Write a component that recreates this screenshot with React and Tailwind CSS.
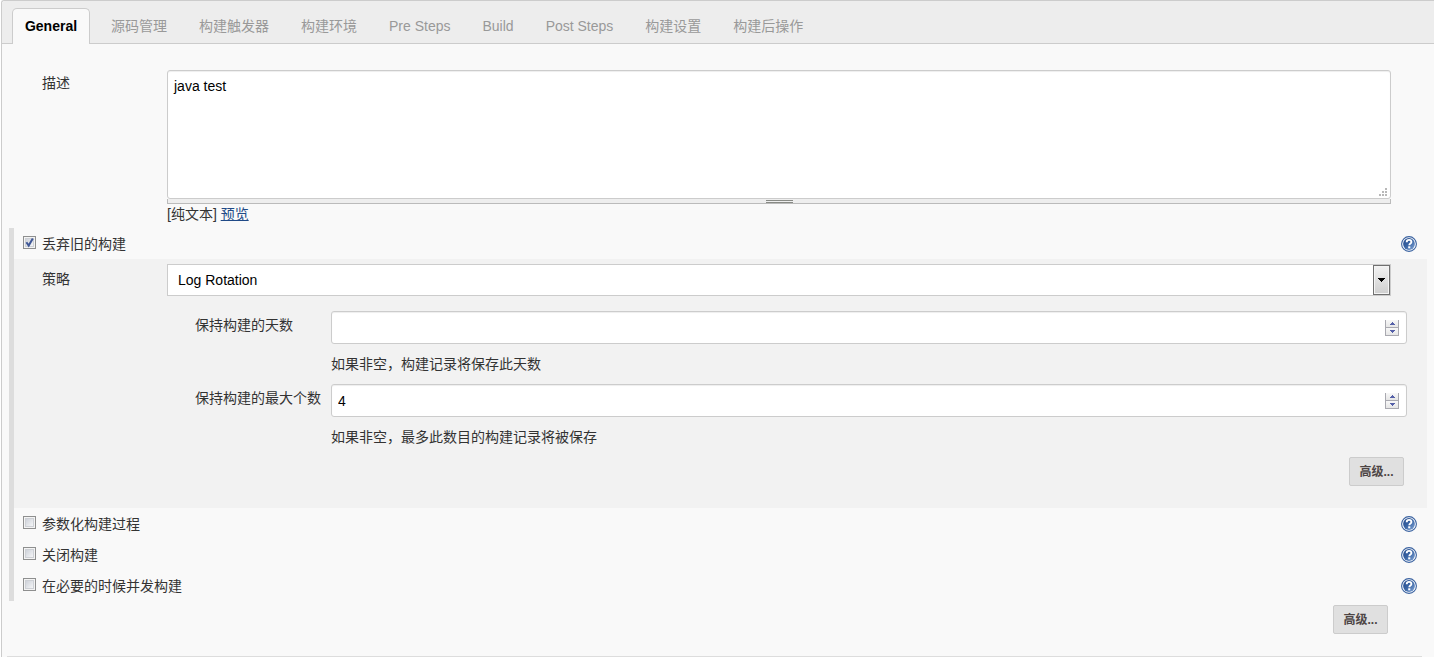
import React, { useState } from "react";

const TABS = [
  "General",
  "源码管理",
  "构建触发器",
  "构建环境",
  "Pre Steps",
  "Build",
  "Post Steps",
  "构建设置",
  "构建后操作",
];

const HelpButton = ({ topic }) => (
  <button type="button" aria-label={`帮助: ${topic}`} className="mt-2 h-4 w-4 shrink-0">
    <svg viewBox="0 0 16 16" className="h-4 w-4">
      <defs>
        <linearGradient id="help-fill" x1="0" y1="0" x2="1" y2="1">
          <stop offset="0" stopColor="#23498a" />
          <stop offset="0.5" stopColor="#3b66a6" />
          <stop offset="1" stopColor="#86a9d8" />
        </linearGradient>
      </defs>
      <circle cx="8" cy="8" r="7.4" fill="#fff" stroke="#3a62a0" strokeWidth="1.1" />
      <circle cx="8" cy="8" r="5.9" fill="url(#help-fill)" />
      <path
        d="M5.7 6.2c0-1.5 1-2.3 2.4-2.3s2.3 0.8 2.3 2c0 1.6-2.1 1.7-2.1 3.4"
        fill="none"
        stroke="#fff"
        strokeWidth="1.9"
      />
      <rect x="7.2" y="10.3" width="2.1" height="2" fill="#fff" />
    </svg>
  </button>
);

const CheckRow = ({ id, label, checked, onChange }) => (
  <div className="flex h-[31px] items-start pl-[9px] pr-[17px]">
    <span className="mt-2 grid h-[13px] w-[13px] shrink-0">
      <input
        id={id}
        type="checkbox"
        checked={checked}
        onChange={onChange}
        className="col-start-1 row-start-1 h-[13px] w-[13px] appearance-none border border-[#8e8f8f] bg-linear-to-br from-[#c4c9d2] to-[#ffffff] shadow-[inset_0_0_0_1px_#f4f4f4,inset_0_0_0_2px_#cdd0d5]"
      />
      {checked && (
        <svg viewBox="0 0 13 13" className="pointer-events-none col-start-1 row-start-1 h-[13px] w-[13px]">
          <path d="M3.4 6.2L5.7 9.6L9.8 2.6" fill="none" stroke="#3f5796" strokeWidth="2" />
        </svg>
      )}
    </span>
    <label htmlFor={id} className="ml-[6px] mt-[6px] flex-1 leading-5">
      {label}
    </label>
    <HelpButton topic={label} />
  </div>
);

const SpinButton = ({ label, onClick, children }) => (
  <button
    type="button"
    aria-label={label}
    onClick={onClick}
    className="flex h-2 w-[14px] items-center justify-center border-x border-b border-[#a9a9b0] bg-linear-to-b from-[#f8f8f8] to-[#e6e6e6]"
  >
    <svg viewBox="0 0 5 3" className="h-[3px] w-[5px]" shapeRendering="crispEdges" fill="#5560a8">
      {children}
    </svg>
  </button>
);

const NumberRow = ({ id, label, hint, value, onChange }) => (
  <div className="flex h-[73px]">
    <label htmlFor={id} className="mt-1 w-[136px] shrink-0 leading-5">
      {label}
    </label>
    <div className="flex-1">
      <div className="flex h-[33px] items-center rounded-[3px] border border-[#ccc] bg-white pr-[7px] shadow-[inset_0_1px_1px_#eee]">
        <input
          id={id}
          type="number"
          value={value}
          onChange={(e) => onChange(e.target.value)}
          className="min-w-0 flex-1 appearance-none bg-transparent pl-[6px] text-black outline-none [appearance:textfield] [&::-webkit-inner-spin-button]:appearance-none"
        />
        <div className="flex flex-col">
          <SpinButton label={`${label} +`} onClick={() => onChange(String(Number(value) + 1))}>
            <path d="M2 0h1v1H2zM1 1h3v1H1zM0 2h5v1H0z" />
          </SpinButton>
          <SpinButton label={`${label} -`} onClick={() => onChange(String(Number(value) - 1))}>
            <path d="M0 0h5v1H0zM1 1h3v1H1zM2 2h1v1H2z" />
          </SpinButton>
        </div>
      </div>
      <p className="mt-[10px] leading-5">{hint}</p>
    </div>
  </div>
);

const AdvancedButton = () => (
  <button
    type="button"
    className="h-[29px] w-[55px] rounded-[2px] border border-[#ccc] bg-[#e0e0e0] text-xs font-bold text-[#4d4545]"
  >
    高级...
  </button>
);

const App = () => {
  const [activeTab, setActiveTab] = useState("General");
  const [description, setDescription] = useState("java test");
  const [days, setDays] = useState("");
  const [maxBuilds, setMaxBuilds] = useState("4");
  const [options, setOptions] = useState({
    discard: true,
    params: false,
    disable: false,
    concurrent: false,
  });

  const toggle = (name) => setOptions({ ...options, [name]: !options[name] });

  return (
    <div className="min-h-screen bg-white pl-px font-['Liberation_Sans','Noto_Sans_CJK_SC',sans-serif] text-sm text-[#333]">
      <div className="min-h-screen rounded-tl-[3px] border-l border-t border-[#ccc] bg-[#f9f9f9]">
        <nav className="flex h-[43px] items-end rounded-tl-[3px] border-b border-[#ccc] bg-[#ededed] pl-[10px]">
          {TABS.map((tab) => (
            <button
              key={tab}
              type="button"
              onClick={() => setActiveTab(tab)}
              className={
                tab === activeTab
                  ? "-mb-px mr-[5px] h-9 min-w-[78px] rounded-t-[5px] border border-b-0 border-[#ccc] bg-[#f9f9f9] px-[10px] pb-[2px] font-bold text-black"
                  : "h-[35px] px-4 text-[#999]"
              }
            >
              {tab}
            </button>
          ))}
        </nav>

        <form onSubmit={(e) => e.preventDefault()}>
          <div className="flex pl-10 pr-[43px] pt-[26px]">
            <label htmlFor="description" className="mt-[3px] w-[125px] shrink-0 leading-5">
              描述
            </label>
            <div className="flex-1">
              <div className="relative">
                <textarea
                  id="description"
                  value={description}
                  onChange={(e) => setDescription(e.target.value)}
                  className="block h-[129px] w-full resize-none rounded-[3px] border border-[#ccc] bg-white px-[6px] py-[5px] leading-5 text-black shadow-[inset_0_1px_1px_#eee] outline-none"
                />
                <svg viewBox="0 0 8 8" fill="#b8b8b8" className="pointer-events-none absolute bottom-[3px] right-1 h-2 w-2">
                  <path d="M6 0h2v2H6zM3 3h2v2H3zM6 3h2v2H6zM0 6h2v2H0zM3 6h2v2H3zM6 6h2v2H6z" />
                </svg>
              </div>
              {/* drag handle under the text area */}
              <div className="flex h-[5px] cursor-row-resize items-center justify-center border-x border-b border-[#bbb] bg-[#eee]">
                <div className="h-[3px] w-[27px] border-y border-[#888a85]"></div>
              </div>
              <p className="leading-5">
                [纯文本]{" "}
                <a href="#preview" className="text-[#204a87] underline">
                  预览
                </a>
              </p>
            </div>
          </div>

          <div className="ml-[7px] mt-1 border-l-5 border-[#ddd]">
            <CheckRow
              id="discard"
              label="丢弃旧的构建"
              checked={options.discard}
              onChange={() => toggle("discard")}
            />
            <div className="mr-[7px] bg-[#f2f2f2] pb-[22px] pt-[5px]">
              <div className="flex pl-7 pr-9">
                <label htmlFor="strategy" className="mt-[5px] w-[125px] shrink-0 leading-5">
                  策略
                </label>
                <div className="relative flex-1">
                  <select
                    id="strategy"
                    className="block h-8 w-full appearance-none border border-[#ccc] bg-white pl-[10px] text-black outline-none"
                  >
                    <option>Log Rotation</option>
                  </select>
                  <span className="pointer-events-none absolute right-px top-px flex h-[30px] w-[17px] items-center justify-center border border-[#707070] bg-linear-to-b from-[#f2f2f2] to-[#cfcfcf] shadow-[inset_0_0_0_1px_#f4f4f4]">
                    <svg viewBox="0 0 7 4" className="h-1 w-[7px]" shapeRendering="crispEdges">
                      <path d="M0 0h7v1H0zM1 1h5v1H1zM2 2h3v1H2zM3 3h1v1H3z" fill="#000" />
                    </svg>
                  </span>
                </div>
              </div>
              <div className="mt-[15px] pl-[181px] pr-5">
                <NumberRow
                  id="days"
                  label="保持构建的天数"
                  hint="如果非空，构建记录将保存此天数"
                  value={days}
                  onChange={setDays}
                />
                <NumberRow
                  id="max-builds"
                  label="保持构建的最大个数"
                  hint="如果非空，最多此数目的构建记录将被保存"
                  value={maxBuilds}
                  onChange={setMaxBuilds}
                />
              </div>
              <div className="flex justify-end pr-[23px]">
                <AdvancedButton />
              </div>
            </div>
            <CheckRow
              id="params"
              label="参数化构建过程"
              checked={options.params}
              onChange={() => toggle("params")}
            />
            <CheckRow
              id="disable"
              label="关闭构建"
              checked={options.disable}
              onChange={() => toggle("disable")}
            />
            <CheckRow
              id="concurrent"
              label="在必要的时候并发构建"
              checked={options.concurrent}
              onChange={() => toggle("concurrent")}
            />
          </div>

          <div className="mt-1 flex justify-end pr-[46px]">
            <AdvancedButton />
          </div>
          <hr className="ml-[5px] mr-3 mt-[22px] border-[#ddd]" />
        </form>
      </div>
    </div>
  );
};

export default App;
